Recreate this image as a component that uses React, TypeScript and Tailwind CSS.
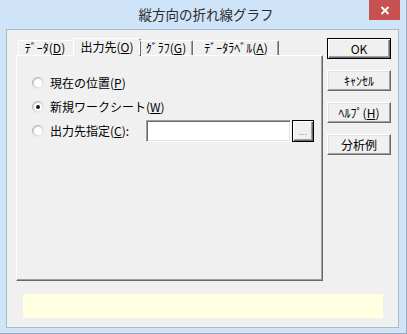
import React from "react";

function Radio({ checked }: { checked?: boolean }) {
  return (
    <svg width="12" height="12" viewBox="0 0 12 12" className="shrink-0">
      <defs>
        <linearGradient id="ro" x1="0" y1="0" x2="1" y2="1">
          <stop offset="0" stopColor="#9c9c9c" />
          <stop offset="1" stopColor="#ffffff" />
        </linearGradient>
        <linearGradient id="ri" x1="0" y1="0" x2="1" y2="1">
          <stop offset="0" stopColor="#c4c4c4" />
          <stop offset="1" stopColor="#ececec" />
        </linearGradient>
      </defs>
      <circle cx="6" cy="6" r="5.5" fill="none" stroke="url(#ro)" strokeWidth="1" />
      <circle cx="6" cy="6" r="4.5" fill="#ffffff" stroke="url(#ri)" strokeWidth="1" />
      {checked && <circle cx="6" cy="6" r="2" fill="#1a1a1a" />}
    </svg>
  );
}

function Btn({ children, def }: { children: React.ReactNode; def?: boolean }) {
  if (def) {
    return (
      <div className="w-[64px] h-[21px] border border-black shadow-[inset_1px_1px_0_#ffffff,inset_-1px_-1px_0_#696969,inset_-2px_-2px_0_#a0a0a0] flex items-center justify-center text-[12px] leading-none text-black">
        {children}
      </div>
    );
  }
  return (
    <div className="w-[64px] h-[21px] border border-t-white border-l-white border-r-[#696969] border-b-[#696969] shadow-[inset_-1px_-1px_0_#a0a0a0,inset_1px_1px_0_#e3e3e3] flex items-center justify-center text-[12px] leading-none text-black">
      {children}
    </div>
  );
}

export default function App() {
  return (
    <div className="w-[407px] h-[334px] bg-[#cfe4f8] border-r border-b border-[#9aabbd] flex flex-col font-['Noto_Sans_CJK_JP',sans-serif] overflow-hidden">
      {/* title bar */}
      <div className="h-[29px] relative flex items-center justify-center shrink-0">
        <span className="text-[13.5px] leading-none text-[#2b2b2b] pl-[6px]">縦方向の折れ線グラフ</span>
        <div className="absolute right-[6px] top-0 w-[31px] h-[20px] bg-[#c75050] flex items-center justify-center">
          <svg width="10" height="9" viewBox="0 0 10 9">
            <path d="M1.5 1 L8.5 8 M8.5 1 L1.5 8" stroke="#ffffff" strokeWidth="1.8" />
          </svg>
        </div>
      </div>

      {/* client */}
      <div className="ml-[6px] w-[393px] h-[299px] border border-[#a8b9cb] bg-[#f0f0f0] flex flex-col text-black">
        <div className="flex pt-[8px] pl-[9px]">
          {/* tab control */}
          <div className="w-[307px] flex flex-col">
            <div className="h-[17px] flex items-end pl-[2px] relative z-10">
              <div className="w-[57px] h-[15px] border-t border-l border-r border-t-white border-l-white border-r-[#696969] shadow-[inset_-1px_0_0_#a0a0a0] rounded-t-[2px] flex items-center justify-center text-[12px] leading-none pr-[3px]">
                ﾃﾞｰﾀ(<u>D</u>)
              </div>
              <div className="-mx-[2px] w-[68px] h-[18px] mb-[-1px] bg-[#f0f0f0] border-t border-l border-r border-t-white border-l-white border-r-[#696969] shadow-[inset_-1px_0_0_#a0a0a0] rounded-t-[2px] flex items-center justify-center text-[12px] leading-none pb-[2px]">
                出力先(<u>O</u>)
              </div>
              <div className="w-[54px] h-[15px] border-t border-l border-r border-t-white border-l-white border-r-[#696969] shadow-[inset_-1px_0_0_#a0a0a0] rounded-t-[2px] flex items-center justify-center text-[12px] leading-none">
                ｸﾞﾗﾌ(<u>G</u>)
              </div>
              <div className="w-[86px] h-[15px] border-t border-l border-r border-t-white border-l-white border-r-[#696969] shadow-[inset_-1px_0_0_#a0a0a0] rounded-t-[2px] flex items-center justify-center text-[12px] leading-none">
                ﾃﾞｰﾀﾗﾍﾞﾙ(<u>A</u>)
              </div>
            </div>
            <div className="h-[226px] border border-t-white border-l-white border-r-[#696969] border-b-[#696969] shadow-[inset_-1px_-1px_0_#a0a0a0] flex flex-col pt-[15px] pl-[15px] text-[12px] leading-none">
              <div className="h-[24px] flex items-center">
                <Radio />
                <span className="ml-[6px]">
                  現在の位置(<u>P</u>)
                </span>
              </div>
              <div className="h-[24px] flex items-center">
                <Radio checked />
                <span className="ml-[6px]">
                  新規ワークシート(<u>W</u>)
                </span>
              </div>
              <div className="h-[24px] flex items-center">
                <Radio />
                <span className="ml-[6px] w-[96px] shrink-0">
                  出力先指定(<u>C</u>):
                </span>
                <div className="w-[145px] h-[22px] bg-white border border-t-[#a0a0a0] border-l-[#a0a0a0] border-b-white border-r-white shadow-[inset_1px_1px_0_#696969,inset_-1px_-1px_0_#e3e3e3]" />
                <div className="ml-[1px] w-[22px] h-[22px] border border-black shadow-[inset_1px_1px_0_#ffffff,inset_-1px_-1px_0_#696969,inset_-2px_-2px_0_#a0a0a0] flex items-end justify-center pb-[5px]">
                  <span className="text-[9px] leading-none text-[#8a9ab0] tracking-[0.5px]">...</span>
                </div>
              </div>
            </div>
          </div>

          {/* buttons */}
          <div className="ml-[4px] flex flex-col gap-[11px]">
            <Btn def>OK</Btn>
            <Btn>ｷｬﾝｾﾙ</Btn>
            <Btn>
              ﾍﾙﾌﾟ(<u>H</u>)
            </Btn>
            <Btn>分析例</Btn>
          </div>
        </div>

        <div className="mt-[13px] ml-[16px] w-[360px] h-[24px] bg-[#ffffe1]" />
      </div>
    </div>
  );
}
